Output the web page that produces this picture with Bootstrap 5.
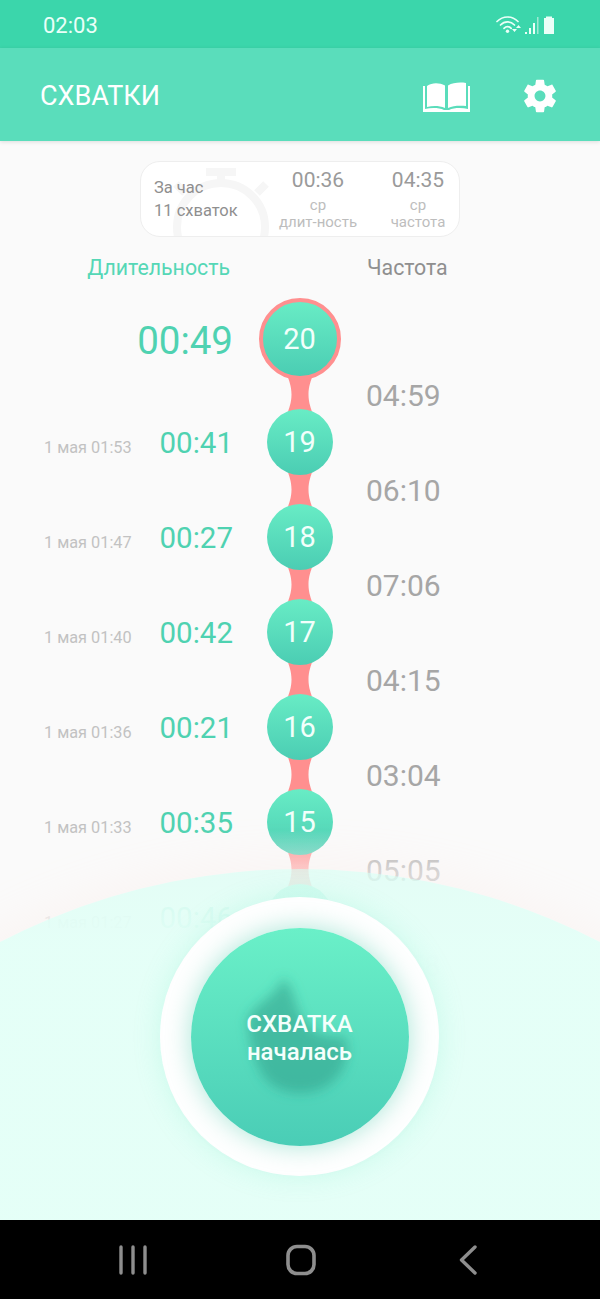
<!DOCTYPE html>
<html lang="ru">
<head>
    <meta charset="UTF-8">
    <meta name="viewport" content="width=device-width, initial-scale=1.0">
    <title>Схватки</title>
    <link href="https://cdn.jsdelivr.net/npm/bootstrap@5.3.0/dist/css/bootstrap.min.css" rel="stylesheet">
    <style>
        html, body { height: 100%; }
        body { font-family: Roboto, "Liberation Sans", sans-serif; background: #fafafa; overflow: hidden; }
        .phone { width: 600px; height: 1299px; }
        .status-line { height: 48px; background: #3bd6ab; color: #eafff8; font-size: 22px; padding: 2px 42px 0 43px; }
        .app-line { height: 93px; background: #5addbb; color: #fff; font-size: 27px; padding: 3px 43px 0 40px; box-shadow: 0 1px 4px rgba(0,0,0,.12); z-index: 2; }
        .book-mark { margin-right: 53px; }
        .main-area { background: #fafafa; overflow: hidden; }

        .summary-box { width: 320px; height: 76px; margin: 20px auto 0; border: 1px solid #eeeeee; border-radius: 20px; background: #fff; overflow: hidden; color: #8f8f8f; }
        .watch-bg { left: 28px; top: 3px; }
        .summary-left { width: 118px; padding-left: 13px; font-size: 16.5px; line-height: 23px; }
        .summary-mid { width: 118px; }
        .summary-right { width: 82px; }
        .summary-val { font-size: 21px; line-height: 26px; color: #9a9a9a; margin-bottom: 4px; }
        .summary-cap { font-size: 15px; line-height: 17px; color: #bdbdbd; }

        .heads { height: 61px; font-size: 21.3px; padding-top: 1px; }
        .head-dur { width: 230px; text-align: right; color: #55d7b6; }
        .head-freq { margin-left: 137px; color: #8f8f8f; }

        .tl-list { z-index: 0; }
        .tl-row { height: 95px; }
        .tl-first { height: 111px; }
        .tl-left { width: 233px; height: 66px; padding-left: 44px; }
        .tl-first .tl-left { height: 82px; }
        .tl-date { font-size: 16.3px; color: #c2c2c2; padding-top: 12px; }
        .tl-dur { font-size: 29.5px; color: #4fd2b1; padding-top: 2px; }
        .tl-first .tl-dur { font-size: 38.500px; padding-top: 4px; }
        .tl-mid { width: 133px; }
        .tl-node { width: 66px; height: 66px; background: linear-gradient(#68ecc5, #4bcdb3); color: #f2fffb; font-size: 29px; padding-top: 2px; z-index: 1; }
        .tl-first .tl-node { width: 82px; height: 82px; border: 4px solid #ff8f8f; }
        .tl-link { display: block; margin-top: -6px; margin-bottom: -6px; }
        .tl-freq { font-size: 30px; color: #a6a6a6; line-height: 36px; padding-top: 64px; }
        .tl-first .tl-freq { padding-top: 80px; }

        .fade-layer { left: 0; right: 0; bottom: 0; height: 390px; background: linear-gradient(rgba(250,250,250,0) 0, rgba(250,250,250,.55) 42px, rgba(250,250,250,.7) 90px, rgba(250,250,250,.8) 140px, #fafafa 220px); }
        .dome { left: -353px; top: 728px; width: 1306px; height: 1306px; background: linear-gradient(rgba(214,255,243,.62) 0, rgba(228,255,247,.97) 80px); box-shadow: 0 0 50px 4px rgba(255,220,210,.2); }
        .ring { left: 160px; top: 756px; width: 279px; height: 279px; background: #fff; box-shadow: 0 0 26px rgba(120,235,205,.25); }
        .push { width: 218px; height: 218px; background: linear-gradient(#6af0c8, #4acdb6); box-shadow: 0 0 26px rgba(85,205,175,.5); color: #f4fffc; font-size: 24px; font-weight: 500; line-height: 28px; }
        .blob { left: 0; top: 0; }
        .push-label { z-index: 1; padding-top: 2px; }

        .nav-line { height: 79px; background: #000; padding-left: 118px; padding-right: 122px; }
    </style>
</head>
<body>
<div class="phone d-flex flex-column">
    <div class="status-line d-flex align-items-center justify-content-between flex-shrink-0">
        <span>02:03</span>
        <svg width="62" height="22" viewBox="0 0 62 22" fill="none">
            <g stroke="#eafff8" stroke-width="1.7" stroke-linecap="round">
                <path d="M1 7.500C7 1.500 16 1.500 22 7.500"/>
                <path d="M4.500 11C8.500 6.800 14.500 6.800 18.500 11"/>
                <path d="M8 14.300C10.200 12 13 12 15.200 14.300"/>
            </g>
            <circle cx="11.500" cy="17.300" r="1.700" fill="#eafff8"/>
            <path d="M16 15h5l-2.500 3zM20 14l2.500-3 2.500 3z" fill="#eafff8"/>
            <path d="M29 18h2v2h-2zM33 14h2v6h-2zM37 9h2v11h-2z" fill="#eafff8"/>
            <path d="M41 3h1.500v17H41z" fill="#9fe9d3"/>
            <path d="M50 4V2.500h6V4h2v16H48V4z" fill="#eafff8"/>
        </svg>
    </div>
    <div class="app-line d-flex align-items-center justify-content-between flex-shrink-0 position-relative">
        <span>СХВАТКИ</span>
        <div class="d-flex align-items-center">
            <svg class="book-mark" width="47" height="31" viewBox="0 0 47 31" fill="#fff">
                <path d="M4 5C9 1.500 16 1.500 22 4.500V27C16 24.500 10 24.500 4 26z"/>
                <path d="M43 2C37 1 30 1.500 25 4.500V27C30 24.500 37 24.500 43 25z"/>
                <path d="M0 5H2V28C8 26.500 16 26.500 21 29H26C31 26.500 39 26.500 45 28V5H47V31H0z"/>
            </svg>
            <svg width="34" height="34" viewBox="2 2 20 20" fill="#fff">
                <path d="M19.14 12.94c.04-.3.06-.61.06-.94 0-.32-.02-.64-.07-.94l2.03-1.58c.18-.14.23-.41.12-.61l-1.92-3.32c-.12-.22-.37-.29-.59-.22l-2.39.96c-.5-.38-1.03-.7-1.62-.94l-.36-2.54c-.04-.24-.24-.41-.48-.41h-3.84c-.24 0-.43.17-.47.41l-.36 2.54c-.59.24-1.13.57-1.62.94l-2.39-.96c-.22-.08-.47 0-.59.22L2.74 8.87c-.12.21-.08.47.12.61l2.03 1.58c-.05.3-.09.63-.09.94s.02.64.07.94l-2.03 1.58c-.18.14-.23.41-.12.61l1.92 3.32c.12.22.37.29.59.22l2.39-.96c.5.38 1.03.7 1.62.94l.36 2.54c.05.24.24.41.48.41h3.84c.24 0 .44-.17.47-.41l.36-2.54c.59-.24 1.13-.56 1.62-.94l2.39.96c.22.08.47 0 .59-.22l1.92-3.32c.12-.22.07-.47-.12-.61l-2.01-1.58zM12 15.200c-1.770 0-3.200-1.430-3.200-3.200s1.430-3.200 3.200-3.200 3.200 1.430 3.200 3.200-1.430 3.200-3.200 3.200z"/>
            </svg>
        </div>
    </div>

    <div class="main-area flex-grow-1 position-relative">
        <div class="summary-box position-relative d-flex align-items-center">
            <svg class="watch-bg position-absolute" width="104" height="100" viewBox="0 0 104 100" fill="none" stroke="#f6f6f6" stroke-width="8">
                <circle cx="52" cy="62" r="44"/>
                <path d="M37 7h30M52 7v14M88 28l9-9M16 28l-9-9"/>
            </svg>
            <div class="summary-left position-relative flex-shrink-0">За час<br>11 схваток</div>
            <div class="summary-mid text-center position-relative flex-shrink-0">
                <div class="summary-val">00:36</div>
                <div class="summary-cap">ср<br>длит-ность</div>
            </div>
            <div class="summary-right text-center position-relative flex-shrink-0">
                <div class="summary-val">04:35</div>
                <div class="summary-cap">ср<br>частота</div>
            </div>
        </div>

        <div class="heads d-flex align-items-center">
            <div class="head-dur">Длительность</div>
            <div class="head-freq">Частота</div>
        </div>

        <div id="rows" class="tl-list position-relative"></div>

        <div class="fade-layer position-absolute"></div>
        <div class="dome position-absolute rounded-circle"></div>
        <div class="ring position-absolute rounded-circle d-flex align-items-center justify-content-center">
            <div class="push rounded-circle position-relative d-flex align-items-center justify-content-center text-center overflow-hidden">
                <svg class="blob position-absolute" width="218" height="218" viewBox="0 0 218 218">
                    <defs><filter id="soft" x="-30%" y="-30%" width="160%" height="160%"><feGaussianBlur stdDeviation="6"/></filter></defs>
                    <path d="M92 50C102 58 103 72 108 85C116 100 130 112 154 108C162 130 150 155 125 163C100 170 75 160 68 140C60 125 58 105 56 92C64 75 84 70 92 50z" fill="#2e9f88" fill-opacity=".55" filter="url(#soft)"/>
                </svg>
                <div class="push-label position-relative">СХВАТКА<br>началась</div>
            </div>
        </div>
    </div>

    <div class="nav-line d-flex align-items-center justify-content-between flex-shrink-0">
        <svg width="30" height="30" viewBox="0 0 30 30" stroke="#8e8e8e" stroke-width="3.400" stroke-linecap="round"><path d="M3 2v26M15 2v26M27 2v26"/></svg>
        <svg class="me-1" width="30" height="32" viewBox="0 0 30 32" fill="none" stroke="#8e8e8e" stroke-width="3.600"><rect x="2" y="2.500" width="26" height="27" rx="9"/></svg>
        <svg width="20" height="30" viewBox="0 0 20 30" fill="none" stroke="#8e8e8e" stroke-width="3.400" stroke-linecap="round" stroke-linejoin="round"><path d="M17 2L3.500 15 17 28"/></svg>
    </div>
</div>

<script>
    var data = [
        { n: 20, dur: '00:49', date: '', freq: '04:59' },
        { n: 19, dur: '00:41', date: '1 мая 01:53', freq: '06:10' },
        { n: 18, dur: '00:27', date: '1 мая 01:47', freq: '07:06' },
        { n: 17, dur: '00:42', date: '1 мая 01:40', freq: '04:15' },
        { n: 16, dur: '00:21', date: '1 мая 01:36', freq: '03:04' },
        { n: 15, dur: '00:35', date: '1 мая 01:33', freq: '05:05' },
        { n: 14, dur: '00:46', date: '1 мая 01:27', freq: '03:58' }
    ];
    // connector runs a little under both circles so its ends stay hidden
    var link = '<svg class="tl-link flex-shrink-0" width="30" height="41" viewBox="0 0 30 41" fill="#ff8f8f"><path d="M2 0C4 7 6.500 12 6.500 20.500S4 34 2 41H28C26 34 23.500 29 23.500 20.500S26 7 28 0z"/></svg>';
    document.getElementById('rows').innerHTML = data.map(function (r, i) {
        return '<div class="tl-row d-flex' + (i === 0 ? ' tl-first' : '') + '">' +
            '<div class="tl-left d-flex align-items-center">' +
                (r.date ? '<span class="tl-date flex-shrink-0">' + r.date + '</span>' : '') +
                '<span class="tl-dur ms-auto">' + r.dur + '</span>' +
            '</div>' +
            '<div class="tl-mid d-flex flex-column align-items-center">' +
                '<div class="tl-node rounded-circle position-relative d-flex align-items-center justify-content-center flex-shrink-0">' + r.n + '</div>' + link +
            '</div>' +
            '<div class="tl-freq">' + r.freq + '</div>' +
        '</div>';
    }).join('');
</script>
</body>
</html>
